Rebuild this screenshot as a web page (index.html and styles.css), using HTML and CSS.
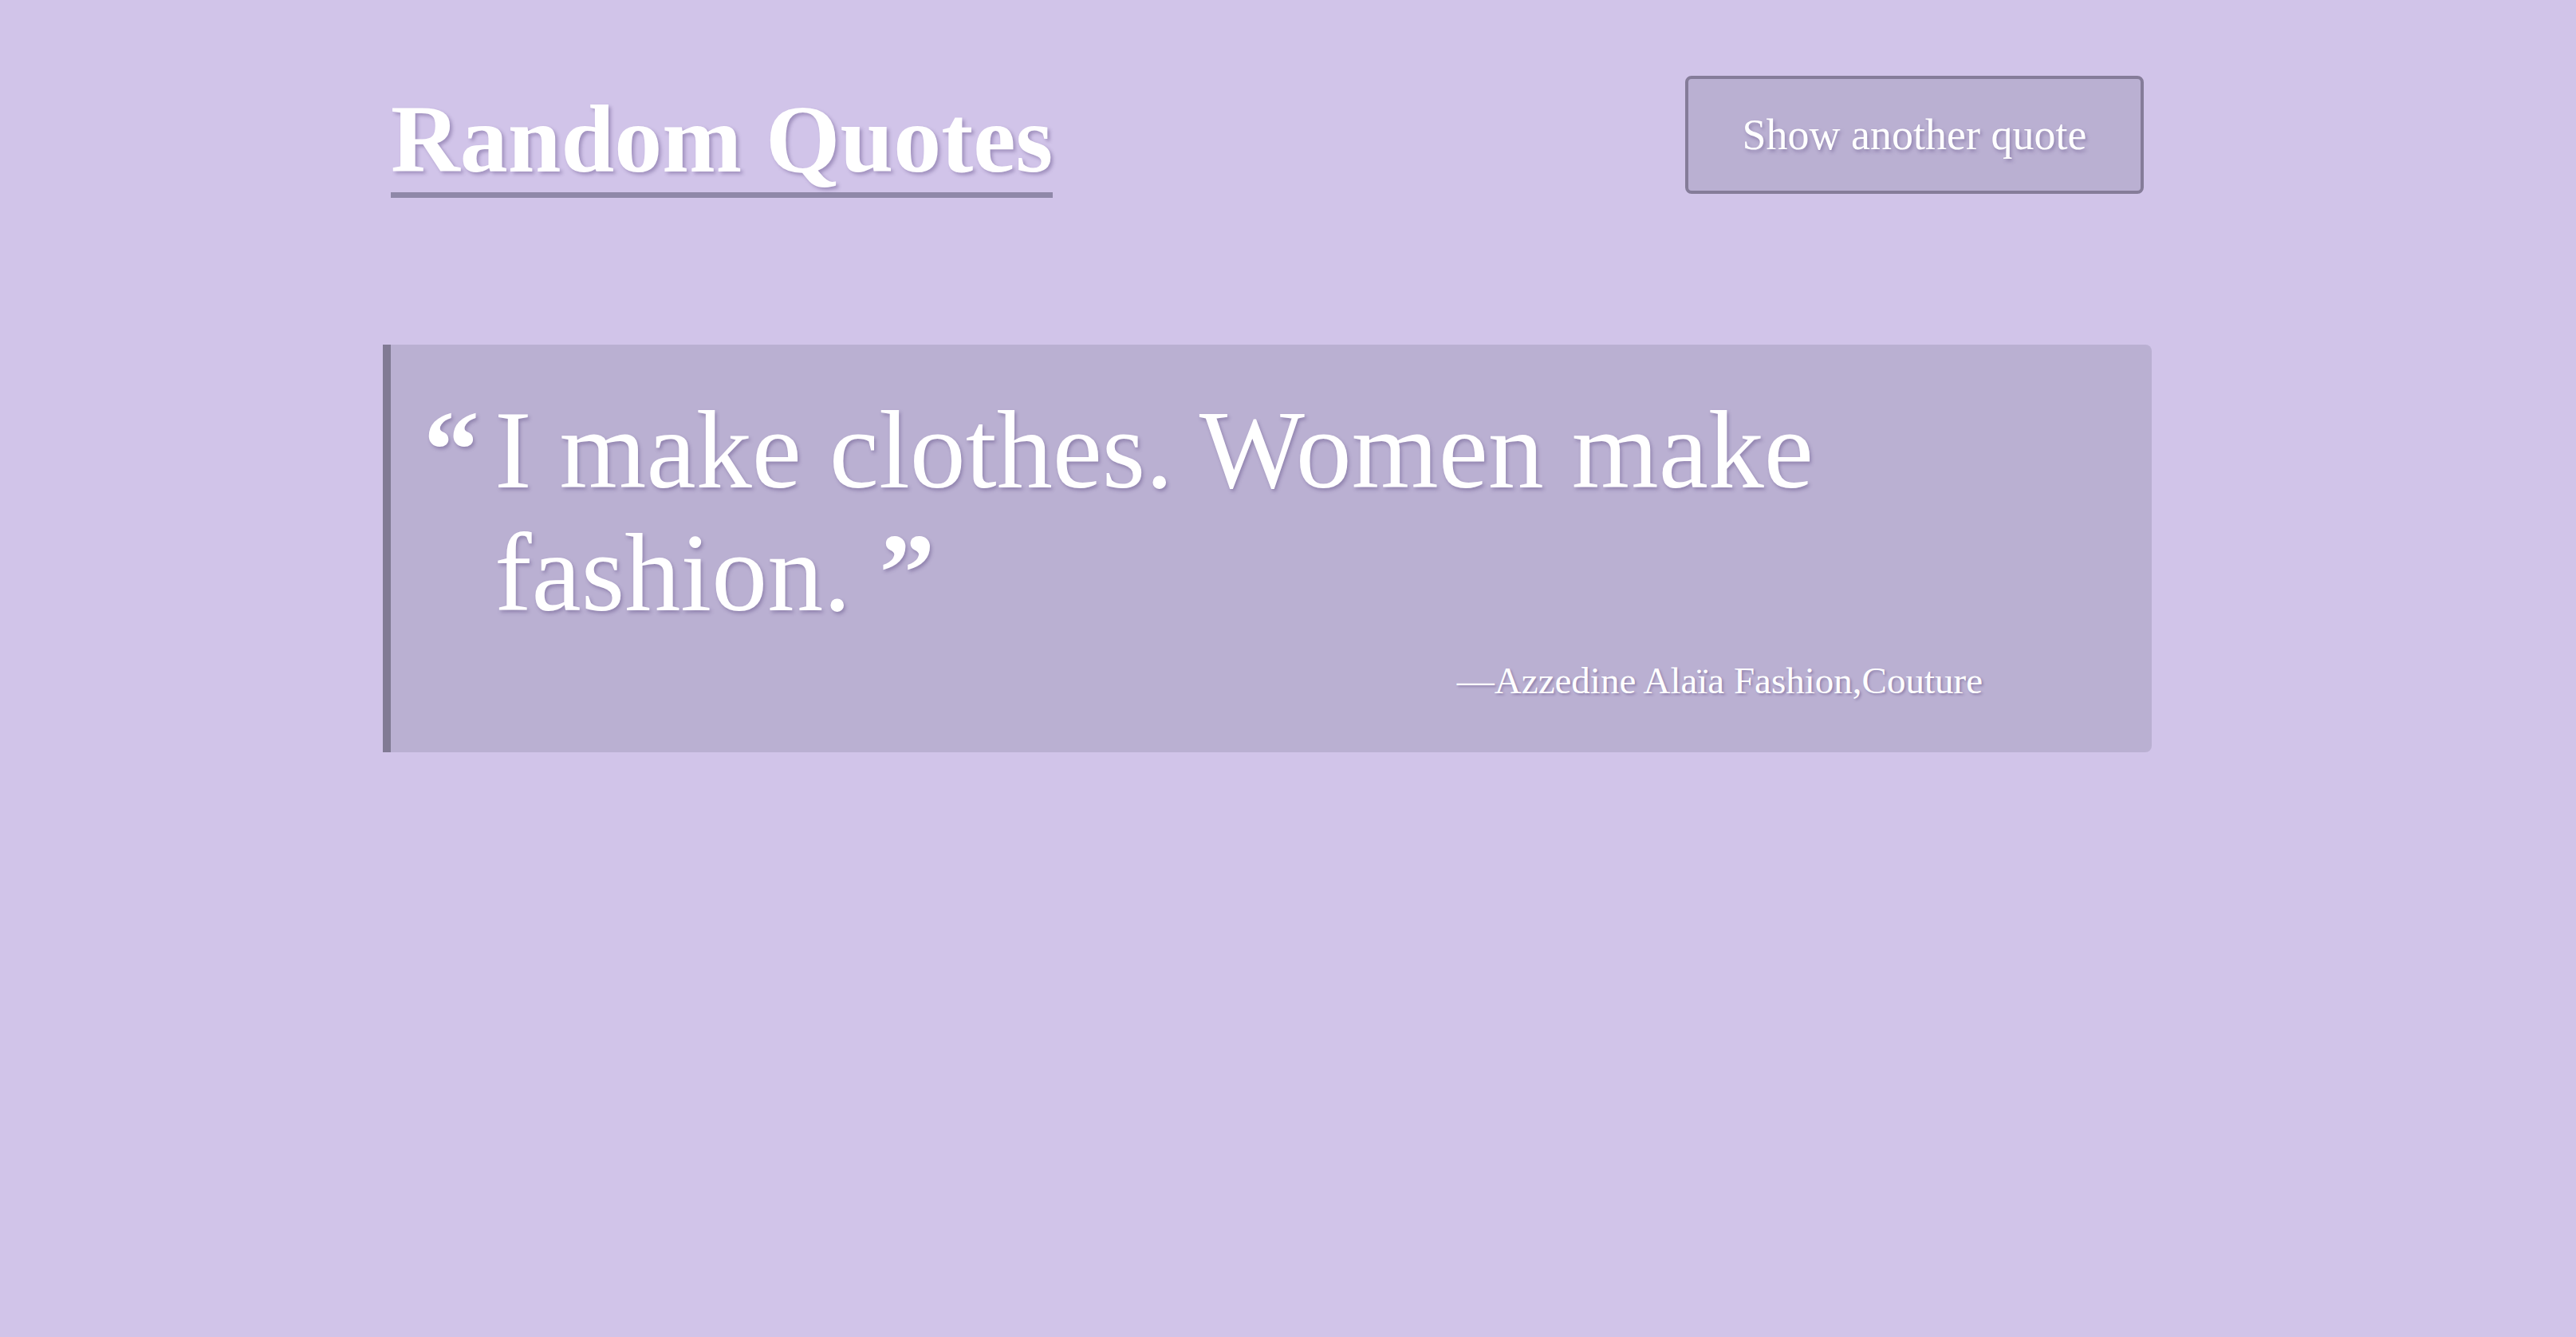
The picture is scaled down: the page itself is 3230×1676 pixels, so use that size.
FILE: index.html
```html
<!DOCTYPE html>
<html lang="en">
<head>
<meta charset="utf-8">
<title>Random Quotes</title>
<link rel="stylesheet" href="styles.css">
</head>
<body>
<div class="page">
  <header class="header">
    <h1 class="title">Random Quotes</h1>
    <button class="next-btn" type="button">Show another quote</button>
  </header>
  <main class="card">
    <blockquote class="quote">
      <span class="mark mark-open">&ldquo;</span>
      <p class="quote-text">I make clothes. Women make fashion. <span class="mark">&rdquo;</span></p>
    </blockquote>
    <p class="author">&mdash;Azzedine Alaïa Fashion,Couture</p>
  </main>
</div>
</body>
</html>
```

FILE: styles.css
```css
html, body {
  margin: 0;
  padding: 0;
}
body {
  background: #d1c4e9;
  font-family: "Liberation Serif", "Times New Roman", serif;
  color: #ffffff;
  min-height: 100vh;
}
.page {
  width: 2218px;
  padding: 95px 0 0 480px;
}
.header {
  display: flex;
  justify-content: space-between;
  align-items: flex-start;
  padding: 0 10px;
}
.title {
  display: inline-block;
  margin: 13px 0 0 0;
  font-size: 120px;
  line-height: 133px;
  font-weight: bold;
  color: #ffffff;
  border-bottom: 7px solid #8f88a8;
  text-shadow: 3px 3px 4px rgba(70, 50, 110, 0.35);
}
.next-btn {
  box-sizing: border-box;
  width: 575px;
  height: 148px;
  padding: 0;
  margin: 0;
  background: #bab0d2;
  border: 4px solid #857c99;
  border-radius: 8px;
  color: #ffffff;
  font-family: "Liberation Serif", "Times New Roman", serif;
  font-size: 54px;
  line-height: 140px;
  text-shadow: 2px 3px 4px rgba(70, 50, 110, 0.35);
  cursor: pointer;
}
.card {
  display: block;
  margin-top: 184px;
  background: #bab0d2;
  border-left: 10px solid #817a94;
  border-radius: 0 8px 8px 0;
  padding: 55px 212px 60px 0;
}
.quote {
  display: flex;
  align-items: flex-start;
  margin: 0;
  padding: 0;
  font-size: 140px;
  line-height: 154px;
}
.mark {
  font-weight: bold;
  color: #ffffff;
}
.mark-open {
  display: block;
  width: 89px;
  margin-left: 41px;
  text-shadow: 2px 3px 4px rgba(70, 50, 110, 0.35);
}
.quote-text {
  flex: 1;
  margin: 0;
  text-shadow: 2px 3px 4px rgba(70, 50, 110, 0.35);
}
.author {
  margin: 28px 0 0 0;
  text-align: right;
  font-size: 47px;
  line-height: 60px;
  text-shadow: 2px 2px 3px rgba(70, 50, 110, 0.35);
}
```
